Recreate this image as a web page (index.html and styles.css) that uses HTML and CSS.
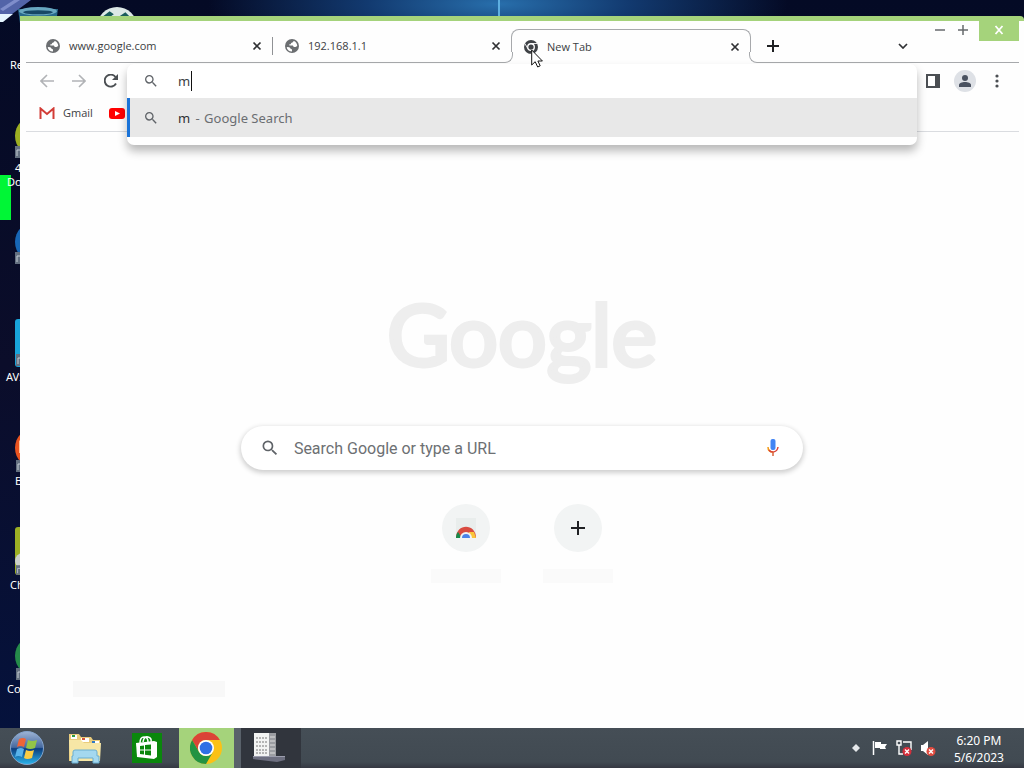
FILE: index.html
```html
<!DOCTYPE html>
<html lang="en">
<head>
<meta charset="utf-8">
<title>New Tab</title>
<link rel="stylesheet" href="styles.css">
</head>
<body>
<svg class="defs" aria-hidden="true">
  <symbol id="globe" viewBox="0 0 16 16"><circle cx="8" cy="8" r="8" fill="#6b6e71"/><path d="M2 9l3 .5 1.500 1.500 1.500 1v2.200C4.500 14 2 12 2 9zM10 2.200L8.500 4 7 4.500 6.500 6H5v1.500h4L10 9h2l2-1c0-3-2-5.300-4-5.800z" fill="#fff"/></symbol>
  <symbol id="close" viewBox="0 0 10 10"><path d="M1.500 1.500l7 7M8.500 1.500l-7 7" stroke="#303134" stroke-width="1.700"/></symbol>
  <symbol id="search" viewBox="0 0 24 24"><path fill="#5f6368" d="M15.500 14h-.79l-.28-.27A6.470 6.470 0 0 0 16 9.500 6.500 6.500 0 1 0 9.500 16c1.610 0 3.090-.59 4.230-1.570l.27.28v.79l5 4.990L20.490 19l-4.990-5zm-6 0C7.010 14 5 11.990 5 9.500S7.010 5 9.500 5 14 7.010 14 9.500 11.990 14 9.500 14z"/></symbol>
  <symbol id="chrome" viewBox="0 0 32 32"><circle cx="16" cy="16" r="16" fill="#fbc116"/><path d="M2.140 8A16 16 0 0 1 29.860 8H16a8 8 0 0 0-6.930 12z" fill="#db4437"/><path d="M2.140 8A16 16 0 0 0 16 32l6.930-12a8 8 0 0 1-13.860 0z" fill="#229342"/><circle cx="16" cy="16" r="8" fill="#fff"/><circle cx="16" cy="16" r="6.300" fill="#2f70e5"/></symbol>
  <symbol id="shortcut" viewBox="0 0 10 12"><path d="M0 0h10v12H0z" fill="#647080"/><path d="M2 10V4h5v5" fill="none" stroke="#c5cdd5"/></symbol>
</svg>
<div class="screen">
  <main class="desktop">
    <svg class="rays" viewBox="0 0 40 24" aria-hidden="true"><path d="M0 20V0h31L4 20z" fill="#5264a8"/><path d="M0 14h13L3 22H0z" fill="#e5f5ff"/><path d="M0 9L14 0h6L3 11z" fill="#7f8ecb"/></svg>
    <div class="flare"></div>
    <div class="greenbar"></div>
    <div class="shortcut bin"><svg viewBox="0 0 38 40"><path d="M0 2h38l-5 36H5z" fill="#27698b"/><ellipse cx="19" cy="4" rx="18" ry="4" fill="#68a7c0"/><ellipse cx="19" cy="5" rx="14" ry="2" fill="#174866"/></svg></div>
    <div class="shortcut ball"><svg viewBox="0 0 38 38"><circle cx="19" cy="19" r="19" fill="#dce8e6"/><path d="M3 11l9-7 4 3-9 6zm18-2l6-4 7 7-8 3z" fill="#195b5b"/></svg></div>
    <div class="shortcut s0"><span>Recycle</span></div>
    <div class="shortcut s1"><svg viewBox="0 0 40 42"><circle cx="20" cy="19" r="20" fill="#9cae22"/><use href="#shortcut" y="29" width="10" height="12"/></svg><span class="two">4K Video<br>Downloader</span></div>
    <div class="shortcut s2"><svg viewBox="0 0 40 42"><circle cx="20" cy="19" r="20" fill="#1766b5"/><use href="#shortcut" y="29" width="10" height="12"/></svg></div>
    <div class="shortcut s3"><svg viewBox="0 0 40 48"><rect width="40" height="48" rx="3" fill="#18a4da"/><use href="#shortcut" x="1" y="35" width="10" height="12"/></svg><span>AVS</span></div>
    <div class="shortcut s4"><svg viewBox="0 0 40 42"><circle cx="20" cy="17" r="20" fill="#e9531f"/><path d="M4 10l4-4v16H4z" fill="#ffc49e"/><use href="#shortcut" x="1" y="29" width="10" height="12"/></svg><span>Brave</span></div>
    <div class="shortcut s5"><svg viewBox="0 0 40 48"><rect width="40" height="48" rx="3" fill="#9caf24"/><circle cx="8" cy="34" r="8" fill="#cbd0ca"/><use href="#shortcut" x="1" y="38" width="8" height="10"/></svg><span>Cheat</span></div>
    <div class="shortcut s6"><svg viewBox="0 0 40 42"><circle cx="20" cy="17" r="20" fill="#258b4a"/><use href="#shortcut" x="1" y="29" width="10" height="12"/></svg><span>Cocos</span></div>

    <section class="window">
      <header class="tabstrip">
        <div class="tabs">
          <div class="tab"><svg class="i14"><use href="#globe"/></svg><span>www.google.com</span><button aria-label="Close tab"><svg class="i10"><use href="#close"/></svg></button></div>
          <div class="tab split"><svg class="i14"><use href="#globe"/></svg><span>192.168.1.1</span><button aria-label="Close tab"><svg class="i10"><use href="#close"/></svg></button></div>
          <div class="tab active"><svg class="i14" viewBox="0 0 32 32"><circle cx="16" cy="16" r="16" fill="#3f4246"/><circle cx="16" cy="16" r="7.500" fill="#3f4246" stroke="#fff" stroke-width="3"/><path d="M16 8h14M9 20L2 8M23 20l-7 12" stroke="#fff" stroke-width="2"/></svg><span>New Tab</span><button aria-label="Close tab"><svg class="i10"><use href="#close"/></svg></button></div>
        </div>
        <button class="newtab" aria-label="New tab"><svg viewBox="0 0 12 12" class="i12"><path d="M6 0v12M0 6h12" stroke="#202124" stroke-width="2"/></svg></button>
        <button class="tabsearch" aria-label="Search tabs"><svg viewBox="0 0 10 6" class="chev"><path d="M1 1l4 4 4-4" fill="none" stroke="#303134" stroke-width="1.700"/></svg></button>
        <div class="controls">
          <button aria-label="Minimize"><svg viewBox="0 0 10 10" class="i10"><path d="M0 5h10" stroke="#66696c" stroke-width="1.500"/></svg></button>
          <button aria-label="Maximize"><svg viewBox="0 0 10 10" class="i10"><path d="M0 5h10M5 0v10" stroke="#66696c" stroke-width="1.500"/></svg></button>
          <button class="exit" aria-label="Close window"><svg viewBox="0 0 10 10" class="i10"><path d="M1.500 1l7 8M8.500 1l-7 8" stroke="#fff" stroke-width="1.800"/></svg></button>
        </div>
      </header>
      <div class="toolbar">
        <button aria-label="Back"><svg viewBox="0 0 14 14" class="i14"><path d="M14 7H1.500M7 1L1 7l6 6" fill="none" stroke="#b1b3b6" stroke-width="1.600"/></svg></button>
        <button aria-label="Forward"><svg viewBox="0 0 14 14" class="i14"><path d="M0 7h12.500M7 1l6 6-6 6" fill="none" stroke="#b1b3b6" stroke-width="1.600"/></svg></button>
        <button aria-label="Reload"><svg viewBox="0 0 14 14" class="i14"><path d="M12 9.500A6 6 0 1 1 11.500 3" fill="none" stroke="#4b4f53" stroke-width="1.900"/><path d="M14 0v6H8z" fill="#4b4f53"/></svg></button>
        <div class="omnibox">
          <div class="popup">
            <label class="entry"><svg class="i16"><use href="#search"/></svg><input type="text" value="m" aria-label="Address and search bar"></label>
            <a class="suggestion" href="#"><svg class="i16"><use href="#search"/></svg><span><b>m</b> - <i>Google Search</i></span></a>
          </div>
        </div>
        <button aria-label="Side panel"><svg viewBox="0 0 14 14" class="i14"><path d="M1 1h12v12H1z" fill="#fff" stroke="#4b4f53" stroke-width="2"/><path d="M9 1h4v12H9z" fill="#4b4f53"/></svg></button>
        <button class="avatar" aria-label="Profile"><svg viewBox="0 0 22 22" class="i22"><circle cx="11" cy="11" r="11" fill="#dee1e6"/><circle cx="11" cy="8" r="3" fill="#4a5260"/><path d="M5 17v-2c0-4 12-4 12 0v2z" fill="#4a5260"/></svg></button>
        <button aria-label="Menu"><svg viewBox="0 0 4 14" class="dots"><g fill="#4b4f53"><circle cx="2" cy="2" r="1.600"/><circle cx="2" cy="7" r="1.600"/><circle cx="2" cy="12" r="1.600"/></g></svg></button>
      </div>
      <nav class="bookmarks">
        <a href="#"><svg viewBox="0 0 16 12" class="mail"><path d="M1.500 12V1.500L8 7l6.500-5.500V12" fill="none" stroke="#d23c36" stroke-width="2"/></svg>Gmail</a>
        <a href="#" aria-label="YouTube"><svg viewBox="0 0 16 12" class="mail"><rect y="1" width="16" height="11" rx="3" fill="#f00"/><path d="M6 4l5 2.500L6 9z" fill="#fff"/></svg></a>
      </nav>
      <div class="page">
        <h1 class="logo">Google</h1>
        <label class="searchbox"><svg class="i20"><use href="#search"/></svg><input type="text" placeholder="Search Google or type a URL" aria-label="Search Google or type a URL"><svg viewBox="0 0 12 18" class="mic"><rect x="3.500" width="5" height="11" rx="2" fill="#4285f4"/><path d="M1 8c0 3 2 5 5 5" fill="none" stroke="#f29b16" stroke-width="1.500"/><path d="M2 11c2 3 8 3 9-3" fill="none" stroke="#db4437" stroke-width="1.500"/><path d="M6 13v4" stroke="#d8643a" stroke-width="1.500"/></svg></label>
        <div class="tiles">
          <a href="#" class="tile" aria-label="Web Store"><i><svg viewBox="0 0 20 20" class="i20"><path d="M0 0h20v20H0z" fill="#e9edec"/><path d="M0 20C0 5 20 5 20 20z" fill="#d94b40"/><path d="M0 20c0-3 1-5 2-6l4 6z" fill="#188a4b"/><path d="M13 14h5l2 6h-7z" fill="#fbc63c"/><path d="M4 20a6 6 0 0 1 12 0z" fill="#f1f3f4"/><path d="M6 20a4 4 0 0 1 8 0z" fill="#4b83e8"/></svg></i><em></em></a>
          <a href="#" class="tile" aria-label="Add shortcut"><i><svg viewBox="0 0 14 14" class="i14"><path d="M7 0v14M0 7h14" stroke="#202124" stroke-width="2"/></svg></i><em></em></a>
        </div>
        <div class="footnote"></div>
      </div>
    </section>
    <svg class="pointer" viewBox="0 0 12 19" aria-hidden="true"><path d="M.7 1v15l3.500-3.300L6.700 18l2.500-1.200L6.900 12h4.500z" fill="#fff" stroke="#111"/></svg>
  </main>

  <footer class="taskbar">
    <button class="start" aria-label="Start"><svg viewBox="0 0 34 34"><defs><linearGradient id="orb" x2="0" y2="1"><stop stop-color="#9eb4d5"/><stop offset=".48" stop-color="#46699f"/><stop offset=".52" stop-color="#0c3d7e"/><stop offset="1" stop-color="#2bb6ed"/></linearGradient></defs><circle cx="17" cy="17" r="16.500" fill="url(#orb)" stroke="#84a4cc"/><path d="M9 8q4-2 7 0l-2 8q-4-2-7 0z" fill="#ee6537"/><path d="M18 9q4 2 9 0l-2 8q-5 2-9 0z" fill="#93c447"/><path d="M7 18q4-2 7 0l-2 8q-4-2-7 0z" fill="#58b3eb"/><path d="M16 19q4 2 8 0l-2 8q-5 2-8 0z" fill="#fbcc43"/></svg></button>
    <button aria-label="File Explorer"><svg viewBox="0 0 34 32"><path d="M1 2h10l2 3h10l2 3h7v21H1z" fill="#e9cc7c"/><path d="M3 3h6v4H3zM13 6h8v4h-8zM24 9h7v3h-7z" fill="#fff"/><path d="M4 3h3v2H4z" fill="#2d9b40"/><path d="M14 6h3v2h-3z" fill="#d3563a"/><path d="M24 9h3v2h-3z" fill="#3179c2"/><path d="M1 8h12l3 3h17l-1 18H2z" fill="#f7e7a6"/><path d="M5 20q0-2 2-2h20q2 0 2 2v4h2v7h-6v-5H10v5H4v-7h1z" fill="#a4d8ef" stroke="#6baed0"/></svg></button>
    <button aria-label="Store"><svg class="store" viewBox="0 0 30 30"><path d="M0 0h30v30H0z" fill="#0a870c"/><path d="M4 10l18-2 3 1v15l-3 2-17-2z" fill="#fff"/><path d="M8 10q0-6 4-6t4 5M11 9q1-6 5-5t3 5" fill="none" stroke="#fff" stroke-width="1.500"/><path d="M8 13l4-.5v4H8zM13 12l6-.5v5h-6zM8 17.500h4v4l-4-.5zM13 17.500h6v5l-6-.7z" fill="#0a870c"/></svg></button>
    <button class="current" aria-label="Google Chrome"><svg><use href="#chrome"/></svg></button>
    <button class="running" aria-label="Task window"><svg viewBox="0 0 34 30"><path d="M0 23h32v4l-8 2-24-3z" fill="#6d6f80"/><path d="M0 23h32v1H0z" fill="#9c9eae"/><path d="M1 0h15v23H1z" fill="#f3f4f3"/><path d="M16 0h7v23h-7z" fill="#9b9da2"/><path d="M3 5h11M3 9h11M3 13h11M3 17h11M3 20h11" stroke="#777" stroke-dasharray="2 1"/><path d="M17 4h5M17 8h5M17 12h5M17 16h5M17 20h5" stroke="#ddd"/></svg></button>
    <div class="tray">
      <button aria-label="Show hidden icons"><svg viewBox="0 0 10 10" class="i10"><path d="M5 1l4 4-4 4-4-4z" fill="#e4e7ea"/></svg></button>
      <button aria-label="Action Center"><svg viewBox="0 0 16 16" class="i16"><path d="M1.500 1v14" stroke="#fff" stroke-width="1.500"/><path d="M3 2h6v2h6l-2 3 1 2H8V8H3z" fill="#fff"/></svg></button>
      <button aria-label="Network"><svg viewBox="0 0 16 16" class="i16"><path d="M1 1h4v4H1zM3 5v9h4M7 2h8v8" fill="none" stroke="#fff" stroke-width="1.400"/><circle cx="11" cy="11.500" r="4.500" fill="#d52f3c"/><path d="M9 9.500l4 4m0-4l-4 4" stroke="#fff" stroke-width="1.400"/></svg></button>
      <button aria-label="Volume"><svg viewBox="0 0 16 16" class="i16"><path d="M1 5h2l5-4v14l-5-4H1z" fill="#fff"/><circle cx="11" cy="11.500" r="4.500" fill="#e04b3f"/><path d="M9 9.500l4 4m0-4l-4 4" stroke="#fff" stroke-width="1.400"/></svg></button>
      <time><span>6:20 PM</span><span>5/6/2023</span></time>
    </div>
  </footer>
</div>
</body>
</html>
```
FILE: styles.css
```css
* { box-sizing: border-box; }
body { margin: 0; font-family: "Noto Sans", "Open Sans", sans-serif; color: #3c4043; }
button { border: 0; padding: 0; background: none; display: flex; align-items: center; justify-content: center; }
input { border: 0; outline: 0; padding: 0; background: none; min-width: 0; flex: 1; font: inherit; color: inherit; }
a { color: inherit; text-decoration: none; }
svg { display: block; flex: none; }
.defs { position: absolute; width: 0; height: 0; }
.i10 { width: 10px; height: 10px; }
.i12 { width: 12px; height: 12px; }
.i14 { width: 14px; height: 14px; }
.i16 { width: 16px; height: 16px; }
.i20 { width: 20px; height: 20px; }
.i22 { width: 22px; height: 22px; }

.screen { height: 100vh; display: flex; flex-direction: column; overflow: hidden; }
.desktop {
  flex: 1; min-height: 0; position: relative; overflow: hidden;
  background: radial-gradient(ellipse 290px 60px at 498px 4px, #286fac, #123a70 45%, transparent), linear-gradient(#040a25, #0b0d2a 50%, #05123c);
}
.rays { position: absolute; left: 0; top: 0; width: 40px; height: 24px; }
.flare { position: absolute; left: 498px; top: 0; width: 2px; height: 16px; background: #5eafe0; }
.greenbar { position: absolute; left: 0; top: 175px; width: 11px; height: 45px; background: #00f636; }

.shortcut { position: absolute; left: 15px; color: #fff; font-size: 11px; line-height: 14px; }
.shortcut svg { width: 40px; }
.shortcut span { position: absolute; white-space: nowrap; left: 0; }
.bin { left: 18px; top: 7px; }
.ball { left: 97px; top: 7px; }
.s0 { left: 10px; top: 58px; }
.s1 { top: 117px; }
.s1 .two { left: -8px; top: 44px; text-indent: 8px; }
.s2 { top: 223px; }
.s3 { top: 319px; }
.s3 span { left: -9px; top: 51px; }
.s4 { top: 431px; }
.s4 span { top: 43px; }
.s5 { top: 527px; }
.s5 span { left: -5px; top: 51px; }
.s6 { top: 639px; }
.s6 span { left: -8px; top: 43px; }

.window {
  position: absolute; inset: 16px 0 0 20px; display: flex; flex-direction: column;
  background: #fefefe; border-top: 5px solid #a5d37b; border-top-right-radius: 4px;
}
.tabstrip { display: flex; margin: 0 5px 0 6px; height: 42px; padding-left: 7px; background: linear-gradient(#a7a9ac, #a7a9ac) bottom / 100% 1px no-repeat; }
.tabs { display: flex; flex: 0 1 718px; align-items: flex-end; }
.tab { flex: 1 1 0; height: 34px; display: flex; align-items: center; gap: 9px; padding: 0 10px 0 13px; font: 11px/16px "Open Sans", "Noto Sans", sans-serif; position: relative; }
.tab span { flex: 1; }
.split::before { content: ""; position: absolute; left: 0; top: 8px; height: 18px; width: 1px; background: #909295; }
.active { background: #fefefe; border: 1px solid #a7a9ac; border-bottom: 0; border-radius: 8px 8px 0 0; padding: 0 10px 0 12px; }
.active::before, .active::after { content: ""; position: absolute; bottom: 0; width: 10px; height: 10px; border: 0 solid #a7a9ac; border-bottom-width: 1px; background: #fefefe; }
.active::before { left: -10px; border-right-width: 1px; border-bottom-right-radius: 8px; box-shadow: 3px 3px #fefefe; }
.active::after { right: -10px; border-left-width: 1px; border-bottom-left-radius: 8px; box-shadow: -3px 3px #fefefe; }
.newtab { width: 44px; padding-top: 8px; }
.tabsearch { margin-left: auto; width: 30px; padding-top: 8px; }
.chev { width: 10px; height: 6px; }
.controls { display: flex; align-items: flex-start; margin-left: 10px; }
.controls button { width: 23px; height: 18px; }
.controls .exit { width: 40px; height: 20px; margin-left: 5px; padding-bottom: 2px; background: #a5d37b; }

.toolbar { height: 36px; display: flex; align-items: center; padding: 0 11px 0 11px; }
.toolbar button { width: 32px; height: 32px; }
.omnibox { flex: 1; align-self: stretch; position: relative; }
.dots { width: 4px; height: 14px; }
.popup { position: absolute; z-index: 2; top: 1px; left: 0; right: 0; padding-bottom: 8px; background: #fff; border-radius: 7px; box-shadow: 0 6px 10px #00000047; font-size: 13px; }
.entry, .suggestion { display: flex; align-items: center; gap: 19px; padding-left: 16px; }
.entry { height: 34px; }
.suggestion { height: 39px; background: #e8e8e8; border-left: 3px solid #1a73d8; padding-left: 13px; color: #6b6e72; }
.suggestion b { font-weight: 400; color: #303134; margin-right: 2px; }
.suggestion i { font-style: normal; margin-left: 1px; }
.entry input { height: 20px; flex: 0 1 14px; border-right: 1px solid #111; }

.bookmarks { height: 33px; margin: 0 5px 0 6px; padding: 0 0 5px 13px; display: flex; align-items: center; gap: 16px; border-bottom: 1px solid #dadce0; font: 11px "Open Sans", "Noto Sans", sans-serif; }
.bookmarks a { display: flex; align-items: center; gap: 8px; }
.mail { width: 16px; height: 12px; }

.page { flex: 1; min-height: 0; display: flex; flex-direction: column; align-items: center; }
.logo { margin: 141px 0 0; height: 153px; font: 400 86px/120px Lato, sans-serif; color: #eeeeee; -webkit-text-stroke: 4px #eeeeee; }
.searchbox { width: 56%; height: 44px; flex: none; border-radius: 22px; display: flex; align-items: center; gap: 14px; padding: 0 24px 0 19px; background: #fff; box-shadow: 0 2px 5px 1px #00000030; font: 16px Roboto, sans-serif; }
.searchbox input::placeholder { color: #6d7073; opacity: 1; }
.mic { width: 12px; height: 18px; }
.tiles { display: flex; gap: 42px; margin-top: 34px; }
.tile { width: 70px; display: flex; flex-direction: column; align-items: center; gap: 17px; }
.tile i { width: 48px; height: 48px; border-radius: 50%; background: #f2f4f4; display: flex; align-items: center; justify-content: center; }
.tile em { width: 70px; height: 14px; background: #fafafa; }
.footnote { align-self: flex-start; margin: auto 0 31px 53px; width: 152px; height: 16px; background: #f8f8f8; }
.pointer { position: absolute; left: 531px; top: 49px; width: 12px; height: 19px; z-index: 3; }

.taskbar { height: 40px; flex: none; display: flex; background: linear-gradient(#454e56, #414a52 85%, #353842); }
.taskbar > button { width: 61px; }
.taskbar > button svg { width: 34px; height: 34px; }
.taskbar > .start { width: 54px; }
.taskbar > button .store { width: 30px; height: 30px; }
.taskbar > .start + button { width: 62px; }
.taskbar > .current { width: 55px; margin-left: 2px; padding-right: 2px; background: #a5d37b; }
.taskbar > .current svg { width: 32px; height: 32px; }
.taskbar > .running { width: 67px; margin-right: auto; padding-right: 3px; background: #31353d; border-left: 7px solid #59616a; }
.taskbar > .running svg { width: 34px; height: 30px; }
.tray { display: flex; align-items: center; gap: 8px; padding-right: 19px; color: #fff; }
.tray button:first-child { margin-right: 3px; }
.tray time { display: flex; flex-direction: column; align-items: center; font-size: 12px; line-height: 17px; margin-left: 10px; padding: 2px 1px 0 0; }
```
